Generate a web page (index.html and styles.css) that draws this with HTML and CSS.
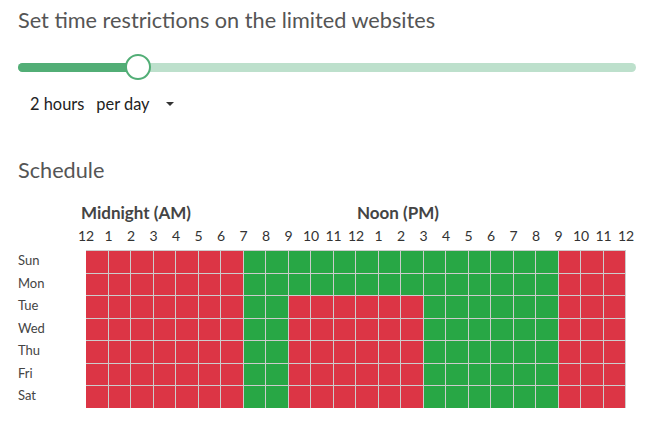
FILE: index.html
```html
<!DOCTYPE html>
<html>
<head>
    <title>Time Restrictions</title>
    <link rel="stylesheet" href="styles.css">
</head>
<body>
    <h1 class="title">Set time restrictions on the limited websites</h1>

    <div class="slider">
        <div class="slider-track">
            <div class="slider-fill" style="width: 120px;"></div>
        </div>
        <div class="slider-thumb" style="left: 107px;"></div>
    </div>

    <div class="limit-row">
        <span class="limit-amount">2 hours</span>
        <span class="limit-period">per day</span>
        <span class="caret"></span>
    </div>

    <h2 class="section-title">Schedule</h2>

    <div class="schedule-head">
        <div class="period period-am">Midnight (AM)</div>
        <div class="period period-pm">Noon (PM)</div>
    </div>
    <div class="hours" id="hours"></div>
    <div class="schedule" id="schedule"></div>

    <script>
        // allowed ranges per day, [start, end) in hours
        const allowed = {
            Sun: [[7, 21]],
            Mon: [[7, 21]],
            Tue: [[7, 9], [15, 21]],
            Wed: [[7, 9], [15, 21]],
            Thu: [[7, 9], [15, 21]],
            Fri: [[7, 9], [15, 21]],
            Sat: [[7, 9], [15, 21]]
        };

        const hours = document.getElementById("hours");
        for (let i = 0; i <= 24; i++) {
            const span = document.createElement("span");
            span.className = "hour";
            span.innerText = (i % 12 === 0) ? 12 : i % 12;
            hours.appendChild(span);
        }

        const schedule = document.getElementById("schedule");
        Object.keys(allowed).forEach(function (day) {
            const label = document.createElement("div");
            label.className = "day";
            label.innerText = day;
            schedule.appendChild(label);

            for (let h = 0; h < 24; h++) {
                const cell = document.createElement("div");
                const on = allowed[day].some(function (r) { return h >= r[0] && h < r[1]; });
                cell.className = "cell " + (on ? "cell-on" : "cell-off");
                schedule.appendChild(cell);
            }
        });
    </script>
</body>
</html>
```

FILE: styles.css
```css
body {
    font-family: Lato, "Open Sans", sans-serif;
    margin: 0;
    padding: 8px 18px;
    background-color: #fff;
    color: #333;
}

.title {
    margin: 0;
    font-size: 21.7px;
    font-weight: normal;
    line-height: 24px;
    color: #555;
}

.slider {
    position: relative;
    width: 618px;
    height: 26px;
    margin-top: 22px;
    display: flex;
    align-items: center;
}

.slider-track {
    width: 100%;
    height: 9px;
    border-radius: 5px;
    background-color: #bde0cc;
    overflow: hidden;
}

.slider-fill {
    height: 100%;
    background-color: #52ae76;
}

.slider-thumb {
    position: absolute;
    top: 0;
    width: 22px;
    height: 22px;
    border: 2px solid #52ae76;
    border-radius: 50%;
    background-color: #fff;
}

.limit-row {
    display: flex;
    align-items: center;
    margin-top: 14px;
    padding-left: 12px;
    font-size: 16.4px;
    color: #222;
}

.limit-period {
    margin-left: 12px;
}

.caret {
    margin-left: 16px;
    width: 0;
    height: 0;
    border-left: 4px solid transparent;
    border-right: 4px solid transparent;
    border-top: 4px solid #333;
}

.section-title {
    margin: 45px 0 0 0;
    font-size: 21.7px;
    font-weight: normal;
    line-height: 24px;
    color: #555;
}

.schedule-head {
    display: grid;
    grid-template-columns: 68px repeat(24, 22.5px);
    margin-top: 20px;
    font-size: 17px;
    font-weight: bold;
    color: #444;
}

.period-am {
    grid-column: 2 / span 12;
    margin-left: -5px;
}

.period-pm {
    grid-column: 14 / span 12;
    margin-left: 1px;
}

.hours {
    display: flex;
    margin-top: 4px;
    padding-left: 56.75px;
    font-size: 14px;
    color: #333;
}

.hour {
    width: 22.5px;
    text-align: center;
    flex-shrink: 0;
}

.schedule {
    display: grid;
    grid-template-columns: 68px repeat(24, 22.5px);
    grid-auto-rows: 22.5px;
    margin-top: 6px;
}

.day {
    font-size: 13px;
    line-height: 21px;
    color: #444;
}

.cell {
    box-sizing: border-box;
    border-top: 1px solid #ccc;
    border-right: 1px solid #ccc;
}

.cell-on {
    background-color: #28a745;
}

.cell-off {
    background-color: #dc3545;
}
```
